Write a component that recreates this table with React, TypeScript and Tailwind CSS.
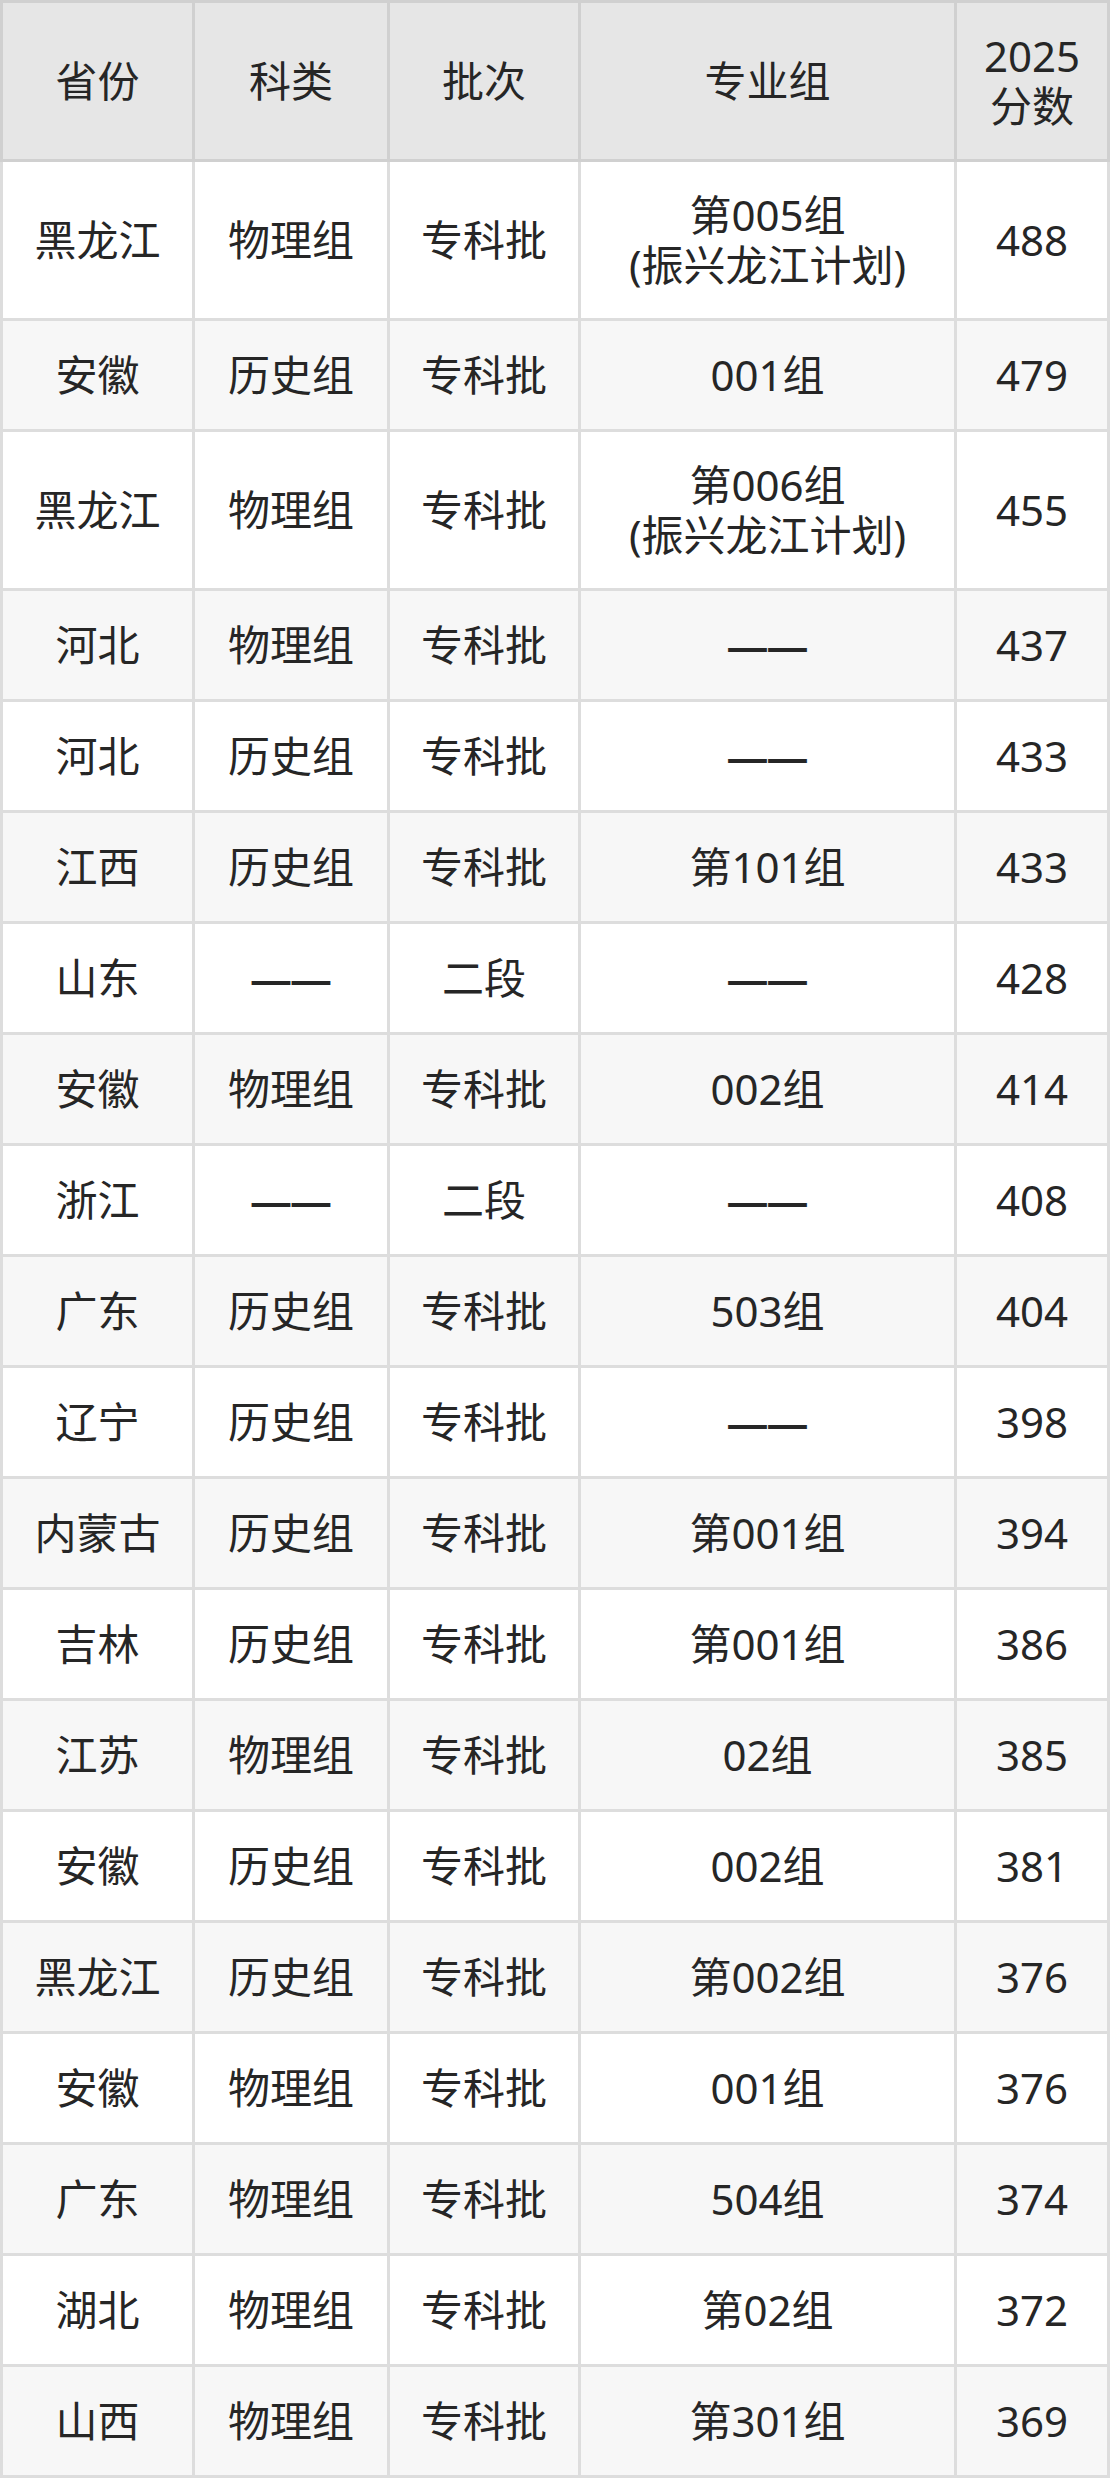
import React from "react";

type Row = {
    province: string;
    subject: string;
    batch: string;
    group: string;
    score: number;
};

const rows: Row[] = [
    { province: "黑龙江", subject: "物理组", batch: "专科批", group: "第005组\n(振兴龙江计划)", score: 488 },
    { province: "安徽", subject: "历史组", batch: "专科批", group: "001组", score: 479 },
    { province: "黑龙江", subject: "物理组", batch: "专科批", group: "第006组\n(振兴龙江计划)", score: 455 },
    { province: "河北", subject: "物理组", batch: "专科批", group: "——", score: 437 },
    { province: "河北", subject: "历史组", batch: "专科批", group: "——", score: 433 },
    { province: "江西", subject: "历史组", batch: "专科批", group: "第101组", score: 433 },
    { province: "山东", subject: "——", batch: "二段", group: "——", score: 428 },
    { province: "安徽", subject: "物理组", batch: "专科批", group: "002组", score: 414 },
    { province: "浙江", subject: "——", batch: "二段", group: "——", score: 408 },
    { province: "广东", subject: "历史组", batch: "专科批", group: "503组", score: 404 },
    { province: "辽宁", subject: "历史组", batch: "专科批", group: "——", score: 398 },
    { province: "内蒙古", subject: "历史组", batch: "专科批", group: "第001组", score: 394 },
    { province: "吉林", subject: "历史组", batch: "专科批", group: "第001组", score: 386 },
    { province: "江苏", subject: "物理组", batch: "专科批", group: "02组", score: 385 },
    { province: "安徽", subject: "历史组", batch: "专科批", group: "002组", score: 381 },
    { province: "黑龙江", subject: "历史组", batch: "专科批", group: "第002组", score: 376 },
    { province: "安徽", subject: "物理组", batch: "专科批", group: "001组", score: 376 },
    { province: "广东", subject: "物理组", batch: "专科批", group: "504组", score: 374 },
    { province: "湖北", subject: "物理组", batch: "专科批", group: "第02组", score: 372 },
    { province: "山西", subject: "物理组", batch: "专科批", group: "第301组", score: 369 },
];

const cols = "grid grid-cols-[189px_192px_188px_373px_150px] gap-[3px]";

// 两个破折号之间留一点空隙，跟原图一样
const Text = ({ value }: { value: string }) => {
    if (value === "——") {
        return (
            <span className="font-['Noto_Sans',sans-serif] tracking-[-2px] mr-[2px] font-semibold">
                ——
            </span>
        );
    }
    return <span className="whitespace-pre-line">{value}</span>;
};

const App = () => {
    return (
        <div className="w-[1110px] font-['Noto_Sans','Noto_Sans_CJK_SC',sans-serif] text-[42px] leading-[1.2] text-[#262626]">
            <div className={`${cols} bg-[#d0d0d0] p-[3px]`}>
                {["省份", "科类", "批次", "专业组", "2025\n分数"].map((h) => (
                    <div
                        key={h}
                        className="h-[156px] bg-[#e6e6e6] flex items-center justify-center text-center"
                    >
                        <Text value={h} />
                    </div>
                ))}
            </div>
            <div className="bg-[#dddddd] px-[3px] pb-[3px] flex flex-col gap-[3px]">
                {rows.map((row, i) => {
                    const tall = row.group.includes("\n");
                    const bg = i % 2 === 0 ? "bg-white" : "bg-[#f7f7f7]";
                    const h = tall ? "h-[156px]" : "h-[108px]";
                    return (
                        <div key={i} className={cols}>
                            {[row.province, row.subject, row.batch, row.group, String(row.score)].map(
                                (v, j) => (
                                    <div
                                        key={j}
                                        className={`${h} ${bg} flex items-center justify-center text-center`}
                                    >
                                        <Text value={v} />
                                    </div>
                                )
                            )}
                        </div>
                    );
                })}
            </div>
        </div>
    );
};

export default App;
